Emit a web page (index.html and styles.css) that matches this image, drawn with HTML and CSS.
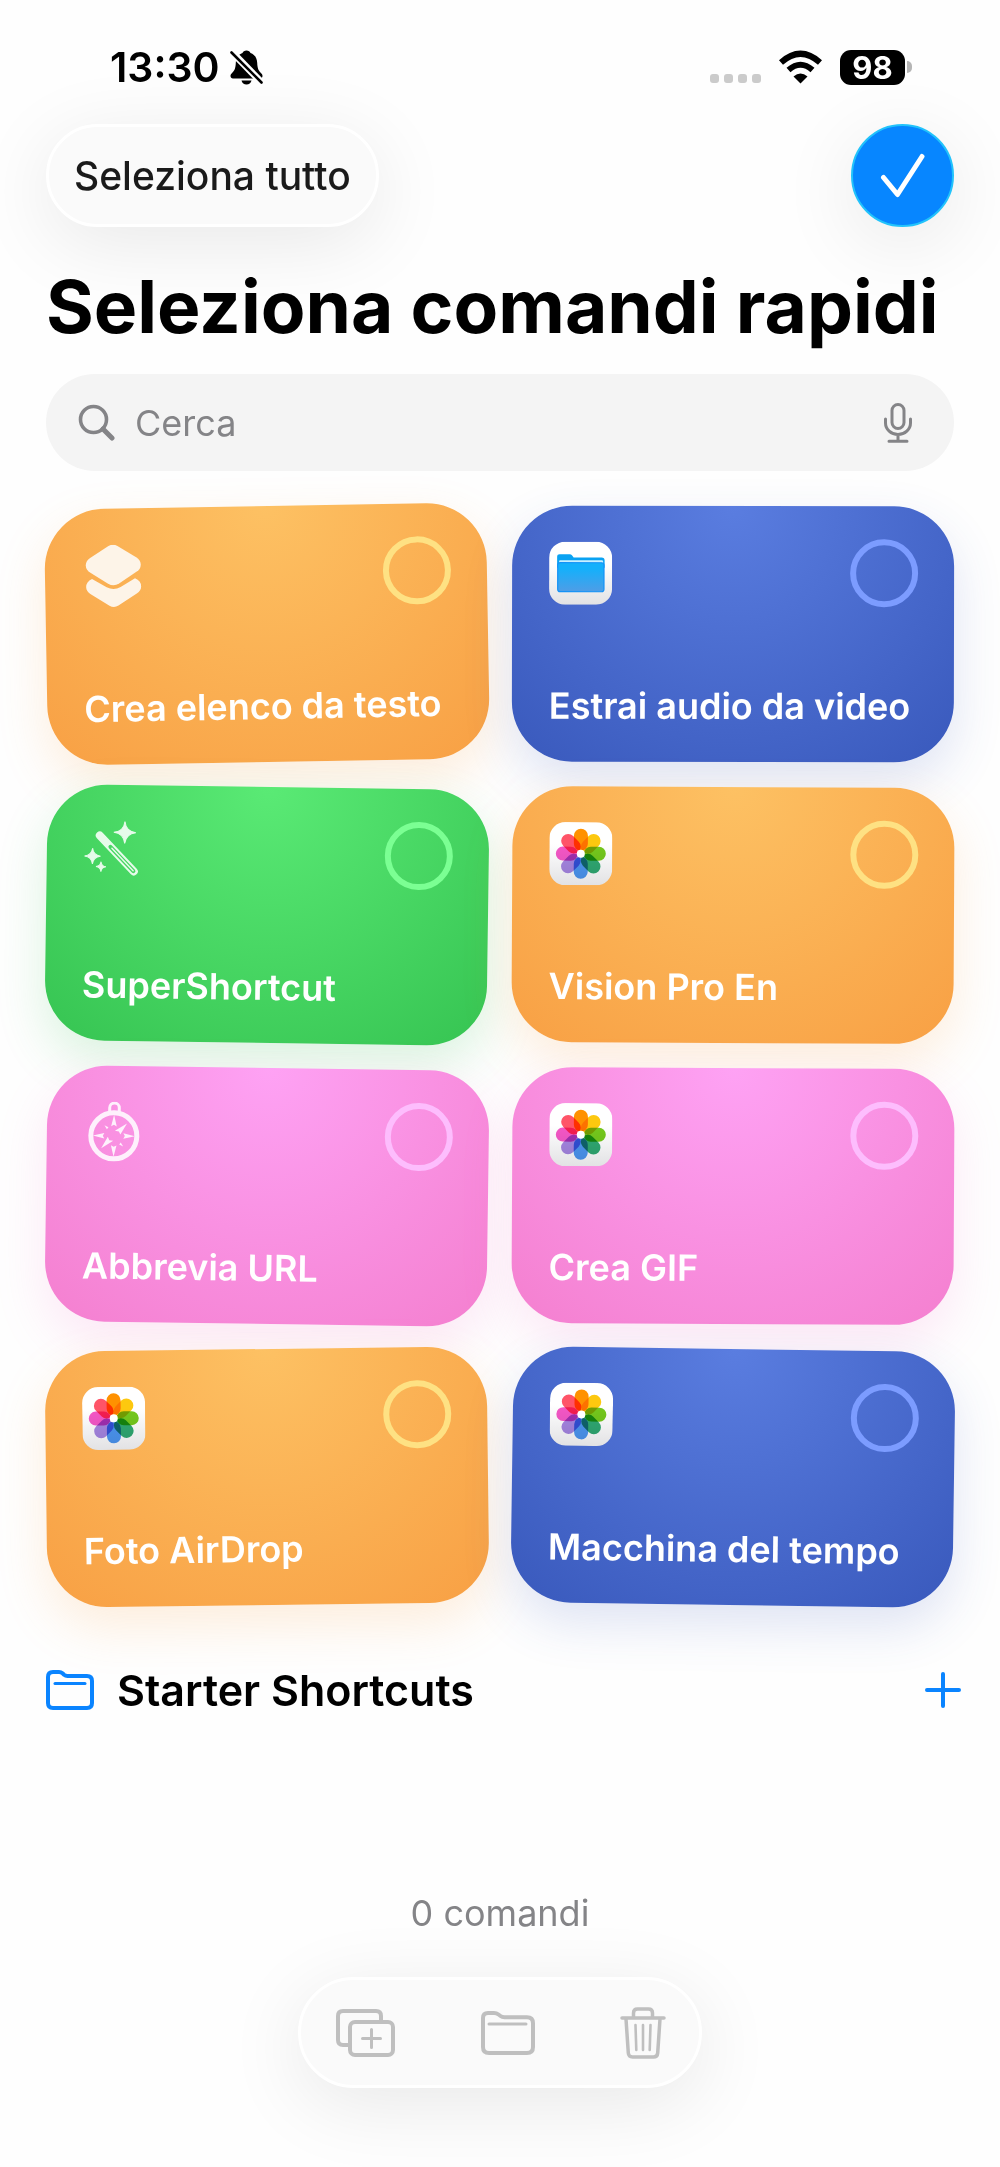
FILE: index.html
```
<!DOCTYPE html>
<html lang="it">
<head>
  <meta charset="UTF-8">
  <meta name="viewport" content="width=device-width, initial-scale=1.0">
  <title>Seleziona comandi rapidi</title>
  <link rel="stylesheet" href="styles.css">
</head>
<body>
  <!-- shared icons -->
  <svg class="sprite" width="0" height="0" aria-hidden="true">
    <symbol id="icon-photos" viewBox="0 0 63 63">
      <rect width="63" height="63" rx="16" fill="url(#tile)"/>
      <g transform="translate(31.5 31.5)">
        <rect class="petal" x="-7" y="-25" width="14" height="22" rx="7" fill="#ff9100"/>
        <rect class="petal" x="-7" y="-25" width="14" height="22" rx="7" fill="#fdc80f" transform="rotate(45)"/>
        <rect class="petal" x="-7" y="-25" width="14" height="22" rx="7" fill="#74c81c" transform="rotate(90)"/>
        <rect class="petal" x="-7" y="-25" width="14" height="22" rx="7" fill="#2fa972" transform="rotate(135)"/>
        <rect class="petal" x="-7" y="-25" width="14" height="22" rx="7" fill="#4c97f2" transform="rotate(180)"/>
        <rect class="petal" x="-7" y="-25" width="14" height="22" rx="7" fill="#a686e2" transform="rotate(225)"/>
        <rect class="petal" x="-7" y="-25" width="14" height="22" rx="7" fill="#f457c6" transform="rotate(270)"/>
        <rect class="petal" x="-7" y="-25" width="14" height="22" rx="7" fill="#ff5468" transform="rotate(315)"/>
        <circle r="4" fill="#fff"/>
      </g>
    </symbol>
    <linearGradient id="tile" x1="0" y1="0" x2="0" y2="1">
      <stop offset=".35" stop-color="#fff"/>
      <stop offset="1" stop-color="#e2e2e4"/>
    </linearGradient>
    <linearGradient id="folder-fill" x1="0" y1="0" x2="0" y2="1">
      <stop offset=".2" stop-color="#14b0fb"/>
      <stop offset="1" stop-color="#4f9de6"/>
    </linearGradient>
  </svg>

  <div class="status-bar">
    <div class="status-left">
      <span class="time">13:30</span>
      <svg width="33" height="35" viewBox="0 0 33 35" aria-hidden="true">
        <path d="M16.500 0.500c2 0 3.500 1 4 2.400 4.300 1.600 6.500 5.300 6.700 9.800.2 5.500 1.300 8 4 10.500.9.900 1.300 1.700 1.300 2.800 0 1.500-1 2.500-2.500 2.500h-27C1.500 28.500.5 27.500.5 26c0-1.100.4-1.900 1.300-2.800 2.700-2.500 3.800-5 4-10.500.2-4.500 2.400-8.200 6.700-9.800.5-1.400 2-2.400 4-2.400z"/>
        <path d="M11.500 30.500h10c-.6 2.500-2.500 4-5 4s-4.400-1.500-5-4z"/>
        <path d="M-1 -1L34 35" stroke="#fefefe" stroke-width="7"/>
        <path d="M1.500 2.500L31.500 32.500" stroke="#000" stroke-width="2.600" stroke-linecap="round"/>
      </svg>
    </div>
    <div class="status-right">
      <div class="signal"><i></i><i></i><i></i><i></i></div>
      <svg width="45" height="34" viewBox="0 0 45 34" aria-hidden="true">
        <path d="M3 12.500Q22.500-5 42 12.500" fill="none" stroke="#000" stroke-width="6"/>
        <path d="M10.500 20Q22.500 9.500 34.500 20" fill="none" stroke="#000" stroke-width="6"/>
        <path d="M22.500 33.500L15.500 26.500Q22.500 20.500 29.500 26.500z"/>
      </svg>
      <div class="battery"><span class="battery-level">98</span></div>
    </div>
  </div>

  <header class="toolbar-top">
    <button type="button" class="btn-select">Seleziona tutto</button>
    <button type="button" class="btn-done" aria-label="Fine">
      <svg width="46" height="46" viewBox="0 0 46 46" fill="none" stroke="#fff" stroke-width="5" stroke-linecap="round" stroke-linejoin="round">
        <path d="M3.500 24.500L17.500 41.500L42 3.500"/>
      </svg>
    </button>
  </header>

  <main>
    <h1>Seleziona comandi rapidi</h1>

    <div class="search">
      <svg width="37" height="37" viewBox="0 0 37 37" fill="none" stroke="#848487" stroke-width="3.600" stroke-linecap="round" aria-hidden="true">
        <circle cx="15.500" cy="15.500" r="13"/>
        <path d="M25 25L34 34" stroke-width="5"/>
      </svg>
      <input type="text" placeholder="Cerca" aria-label="Cerca">
      <button type="button" class="btn-mic" aria-label="Dettatura">
        <svg width="28" height="40" viewBox="0 0 28 40" fill="none" stroke="#848487" stroke-width="3" stroke-linecap="round">
          <rect x="8" y="1.500" width="12" height="24" rx="6"/>
          <path d="M1.500 16v4a12.500 11.500 0 0 0 25 0v-4M14 31.500V38M5 38.300h18"/>
        </svg>
      </button>
    </div>

    <div class="cards">
      <label class="card orange tilt-left-more">
        <span class="card-top">
          <svg width="63" height="63" viewBox="0 0 63 63" fill="#fdf4e8" aria-hidden="true">
            <path d="M27 1.300Q31.500-1.200 36 1.300L54.500 13Q59 16 59 20.300T54.500 27.600L37 39Q31.500 42.200 26 39L8.500 27.600Q4 24.600 4 20.300T8.500 13z"/>
            <path d="M10 34Q4 36.500 4 42.200Q4 46.300 8.500 49.200L27 61Q31.500 63.800 36 61L54.500 49.200Q59 46.300 59 42.200Q59 36.500 53 34L38.500 42.500Q31.500 46 24.500 42.500z"/>
          </svg>
          <input type="checkbox" class="pick">
        </span>
        <span class="card-name">Crea elenco da testo</span>
      </label>

      <label class="card blue tilt-none">
        <span class="card-top">
          <svg width="63" height="63" viewBox="0 0 63 63" aria-hidden="true">
            <rect width="63" height="63" rx="16" fill="url(#tile)"/>
            <path d="M8 15q0-2.500 2.500-2.500h10q1.500 0 2.500 1.200l1.500 2h28q3 0 3 3V26H8z" fill="#0aa2f2"/>
            <path d="M10 19.500q0-1 1-1h41.500q1.500 0 1.500 1V24H10z" fill="#c9f0ff"/>
            <rect x="8.600" y="21" width="46.300" height="29" rx="2.500" fill="url(#folder-fill)" stroke="#1492f7" stroke-width="1.200"/>
          </svg>
          <input type="checkbox" class="pick">
        </span>
        <span class="card-name">Estrai audio da video</span>
      </label>

      <label class="card green tilt-right-more">
        <span class="card-top">
          <svg width="63" height="63" viewBox="0 0 63 63" fill="#e6fbea" aria-hidden="true">
            <path d="M40.700.5Q41.800 10.400 51.700 11.500Q41.800 12.600 40.700 22.500Q39.600 12.600 29.700 11.500Q39.600 10.400 40.700.5z" stroke="#e6fbea" stroke-width="1"/>
            <path d="M8.700 27.500Q9.500 34.700 16.700 35.500Q9.500 36.300 8.700 43.500Q7.900 36.300.7 35.500Q7.900 34.700 8.700 27.500z" stroke="#e6fbea" stroke-width="1"/>
            <path d="M17.300 41Q17.800 45.500 22.300 46Q17.800 46.500 17.300 51Q16.800 46.500 12.300 46Q16.800 45.500 17.300 41z" stroke="#e6fbea" stroke-width="1"/>
            <path d="M15.700 14.800L50.200 50.300" stroke="#e6fbea" stroke-width="8" stroke-linecap="round"/>
            <path d="M26.500 26L49.800 50" stroke="#47d762" stroke-width="4" stroke-linecap="round"/>
            <path d="M28 27.500L49.500 49.600" stroke="#e6fbea" stroke-width="1.500" stroke-linecap="round"/>
          </svg>
          <input type="checkbox" class="pick">
        </span>
        <span class="card-name">SuperShortcut</span>
      </label>

      <label class="card orange tilt-right">
        <span class="card-top">
          <svg width="63" height="63" aria-hidden="true"><use href="#icon-photos"/></svg>
          <input type="checkbox" class="pick">
        </span>
        <span class="card-name">Vision Pro En</span>
      </label>

      <label class="card pink tilt-right-more">
        <span class="card-top">
          <svg width="63" height="63" viewBox="0 0 63 63" fill="#fef0fc" aria-hidden="true">
            <circle cx="30" cy="34" r="23" fill="none" stroke="#fef0fc" stroke-width="5"/>
            <path d="M25.500 10V6a4.800 4.800 0 0 1 9.600 0v4" fill="none" stroke="#fef0fc" stroke-width="3"/>
            <path d="M30 13l2.800 11.500L30 23l-2.800 1.500z"/>
            <path d="M30 55l2.800-11.500L30 45l-2.800-1.500z"/>
            <path d="M9 34l11.500-2.800L19 34l1.500 2.800z"/>
            <path d="M51 34l-11.500-2.800L41 34l-1.500 2.800z"/>
            <path d="M43 21.500L36.500 32.500L35 29.500L31 29z"/>
            <path d="M17.500 46.500L24 35L25.500 38.500L29.500 38.800z"/>
            <path d="M20.500 23.500l4 2-1.500 2zM39.500 44.500l-4-2 1.500-2z"/>
          </svg>
          <input type="checkbox" class="pick">
        </span>
        <span class="card-name">Abbrevia URL</span>
      </label>

      <label class="card pink tilt-right">
        <span class="card-top">
          <svg width="63" height="63" aria-hidden="true"><use href="#icon-photos"/></svg>
          <input type="checkbox" class="pick">
        </span>
        <span class="card-name">Crea GIF</span>
      </label>

      <label class="card orange tilt-left">
        <span class="card-top">
          <svg width="63" height="63" aria-hidden="true"><use href="#icon-photos"/></svg>
          <input type="checkbox" class="pick">
        </span>
        <span class="card-name">Foto AirDrop</span>
      </label>

      <label class="card blue tilt-right-more">
        <span class="card-top">
          <svg width="63" height="63" aria-hidden="true"><use href="#icon-photos"/></svg>
          <input type="checkbox" class="pick">
        </span>
        <span class="card-name">Macchina del tempo</span>
      </label>
    </div>

    <section class="folder">
      <svg width="48" height="40" viewBox="0 0 48 40" fill="none" stroke="#0a84ff" stroke-width="4" stroke-linecap="round" stroke-linejoin="round" aria-hidden="true">
        <path d="M2 7q0-5 5-5h6q2 0 3.500 1.300l1.500 1.400Q19.500 6 21.500 6H41q5 0 5 5v22q0 5-5 5H7q-5 0-5-5z"/>
        <path d="M9 13.500h30" stroke-width="3"/>
      </svg>
      <h2>Starter Shortcuts</h2>
      <button type="button" class="btn-add" aria-label="Aggiungi">
        <svg width="36" height="36" viewBox="0 0 36 36" stroke="#0a84ff" stroke-width="4" stroke-linecap="round">
          <path d="M18 2v32M2 18h32"/>
        </svg>
      </button>
    </section>
  </main>

  <footer>
    <p class="count">0 comandi</p>
    <div class="toolbar-bottom">
      <button type="button" disabled aria-label="Duplica">
        <svg width="60" height="48" viewBox="0 0 60 48" fill="none" stroke="#bfbfbf" stroke-width="4" stroke-linecap="round" stroke-linejoin="round">
          <path d="M45 11V7q0-5-5-5H7Q2 2 2 7v24q0 5 5 5h5" stroke-linecap="butt"/>
          <rect x="14" y="13" width="43" height="33" rx="5"/>
          <path d="M35.500 20.500v18M26.500 29.500h18" stroke-width="3"/>
        </svg>
      </button>
      <button type="button" disabled aria-label="Sposta">
        <svg width="54" height="44" viewBox="0 0 54 44" fill="none" stroke="#bfbfbf" stroke-width="4" stroke-linecap="round" stroke-linejoin="round">
          <path d="M2 7q0-5 5-5h6q2.500 0 4.500 1.500l2 1.500q1.500 1.200 4 1.200H46q6 0 6 6V36q0 6-6 6H8q-6 0-6-6z"/>
          <path d="M8 13h37" stroke-width="3"/>
        </svg>
      </button>
      <button type="button" disabled aria-label="Elimina">
        <svg width="46" height="52" viewBox="0 0 46 52" fill="none" stroke="#bfbfbf" stroke-width="3.500" stroke-linecap="round" stroke-linejoin="round">
          <path d="M2 11h42M13.500 10V6q0-4 4-4h11q4 0 4 4v4M6 12l2.300 34q.3 4 4.200 4h21q3.900 0 4.200-4L40 12"/>
          <path d="M15.500 18l.8 25M23 18v25M30.500 18l-.8 25" stroke-width="2.600"/>
        </svg>
      </button>
    </div>
  </footer>
</body>
</html>
```
FILE: styles.css
```
* {
  margin: 0;
  padding: 0;
  box-sizing: border-box;
}

body {
  display: flex;
  flex-direction: column;
  min-height: 100vh;
  padding: 44px 46px 79px;
  background: #fefefe;
  color: #000;
  font-family: Inter, "Liberation Sans", sans-serif;
  overflow-x: hidden;
}

button {
  border: none;
  background: none;
  font-family: inherit;
  cursor: pointer;
}

button:disabled {
  cursor: default;
}

svg {
  display: block;
  flex-shrink: 0;
}

.sprite {
  position: absolute;
}

.petal {
  mix-blend-mode: multiply;
}

/* Status bar */
.status-bar {
  display: flex;
  justify-content: space-between;
  align-items: center;
  height: 46px;
  padding: 0 42px 0 64px;
}

.status-left {
  display: flex;
  align-items: center;
  gap: 10px;
}

.time {
  font-size: 41px;
  line-height: 48px;
  font-weight: 600;
}

.status-right {
  display: flex;
  align-items: center;
  gap: 17px;
}

.signal {
  display: flex;
  gap: 5px;
  padding-top: 22px;
}

.signal i {
  width: 9px;
  height: 9px;
  border-radius: 3px;
  background: #cbcbcb;
}

.battery {
  display: flex;
  align-items: center;
  gap: 2px;
}

.battery-level {
  width: 65px;
  border-radius: 11px;
  background: #000;
  color: #fff;
  font-size: 31px;
  line-height: 35px;
  font-weight: 700;
  text-align: center;
}

.battery::after {
  content: "";
  width: 5px;
  height: 12px;
  border-radius: 0 5px 5px 0;
  background: #b5b5b5;
}

/* Top buttons */
.toolbar-top {
  display: flex;
  justify-content: space-between;
  margin-top: 34px;
}

.btn-select {
  height: 103px;
  padding: 0 25px;
  border: 3px solid #fff;
  border-radius: 52px;
  background: #fafafa;
  box-shadow: 0 16px 80px rgba(0, 0, 0, 0.09);
  color: #1a1a1a;
  font-size: 39px;
  font-weight: 500;
}

.btn-done {
  display: flex;
  align-items: center;
  justify-content: center;
  width: 103px;
  height: 103px;
  border: 2px solid #22c3fb;
  border-radius: 50%;
  background: #0786ff;
  box-shadow: 0 16px 80px rgba(0, 0, 0, 0.09);
}

h1 {
  margin-top: 40px;
  font-size: 73px;
  line-height: 80px;
  font-weight: 700;
  white-space: nowrap;
}

/* Search */
.search {
  display: flex;
  align-items: center;
  gap: 20px;
  height: 97px;
  margin-top: 27px;
  padding: 0 42px 0 32px;
  border-radius: 49px;
  background: #f4f4f4;
}

.search input {
  flex: 1;
  min-width: 0;
  border: none;
  outline: none;
  background: none;
  color: #000;
  font-family: inherit;
  font-size: 36px;
}

.search input::placeholder {
  color: #848487;
  opacity: 1;
}

/* Shortcut cards */
.cards {
  display: grid;
  grid-template-columns: 1fr 1fr;
  gap: 25px 24px;
  margin-top: 35px;
}

.card {
  display: flex;
  flex-direction: column;
  justify-content: space-between;
  min-height: 256px;
  padding: 33px 36px 34px 37px;
  border-radius: 60px;
  color: #fff;
  cursor: pointer;
}

.card-top {
  display: flex;
  justify-content: space-between;
  align-items: center;
}

.card-name {
  font-size: 36px;
  line-height: 44px;
  font-weight: 600;
  white-space: nowrap;
}

.pick {
  appearance: none;
  width: 68px;
  height: 68px;
  border: 6px solid;
  border-radius: 50%;
  cursor: pointer;
}

.pick:checked {
  background: #fff;
}

.orange {
  background: radial-gradient(circle at 50% 0, #fdc163, #f8a044);
  box-shadow: 0 20px 50px rgba(248, 160, 68, 0.18);
}

.orange .pick { border-color: #fee183; }

.blue {
  background: radial-gradient(circle at 50% 0, #5a7de0, #3959bc);
  box-shadow: 0 20px 50px rgba(57, 89, 188, 0.16);
}

.blue .pick { border-color: #7c9cff; }

.green {
  background: radial-gradient(circle at 50% 0, #5aea75, #36c452);
  box-shadow: 0 20px 50px rgba(54, 196, 82, 0.18);
}

.green .pick { border-color: #7bff93; }

.pink {
  background: radial-gradient(circle at 50% 0, #fea2f4, #f47fcf);
  box-shadow: 0 20px 50px rgba(244, 127, 207, 0.18);
}

.pink .pick { border-color: #fdbdfd; }

/* Jiggle while editing */
.tilt-left-more { transform: rotate(-1deg); }
.tilt-left { transform: rotate(-0.7deg); }
.tilt-none { transform: rotate(0.1deg); }
.tilt-right { transform: rotate(0.3deg); }
.tilt-right-more { transform: rotate(0.8deg); }

/* Folder row */
.folder {
  display: flex;
  align-items: center;
  margin: 61px -7px 0 0;
}

.folder h2 {
  flex: 1;
  margin-left: 23px;
  font-size: 43px;
  line-height: 48px;
  font-weight: 600;
}

/* Footer */
footer {
  display: flex;
  flex-direction: column;
  align-items: center;
  gap: 42px;
  margin-top: auto;
}

.count {
  color: #848487;
  font-size: 36px;
  line-height: 44px;
}

.toolbar-bottom {
  display: flex;
  align-items: center;
  gap: 85px;
  height: 111px;
  padding: 0 33px 0 35px;
  border: 3px solid #fff;
  border-radius: 56px;
  background: #fafafa;
  box-shadow: 0 16px 80px rgba(0, 0, 0, 0.09);
}
```
